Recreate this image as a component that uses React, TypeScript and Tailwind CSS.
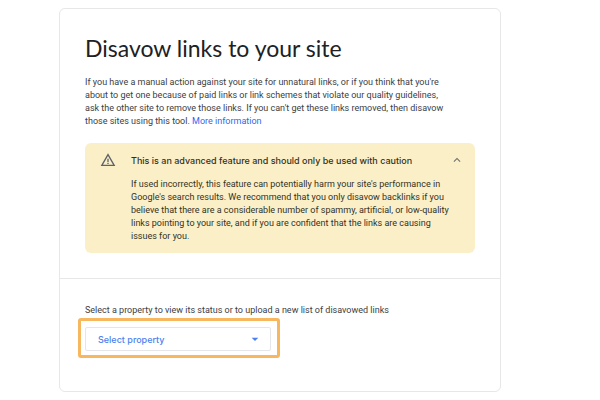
import { useState } from "react";
import { MdArrowDropDown, MdExpandLess, MdExpandMore, MdWarningAmber } from "react-icons/md";

function CautionNotice() {
  const [open, setOpen] = useState(true);

  return (
    <section className="mt-[15px] flex rounded-md bg-[#fbefc8] pt-[9px] pr-[11px] pb-2.5 pl-[15px] text-[#33321f]">
      <MdWarningAmber className="h-4 w-4 shrink-0 text-[#5f6368]" aria-hidden="true" />
      <div className="ml-[15px] min-w-0 flex-1">
        <div className="flex h-4 items-center justify-between">
          <h2 className="font-[Inter,sans-serif] text-[9px] font-medium text-[#33321f]">
            This is an advanced feature and should only be used with caution
          </h2>
          <button
            type="button"
            aria-label="Toggle details"
            aria-expanded={open}
            onClick={() => setOpen(!open)}
            className="text-[#6f7070]"
          >
            {open ? <MdExpandLess className="h-3.5 w-3.5" /> : <MdExpandMore className="h-3.5 w-3.5" />}
          </button>
        </div>
        {open && (
          <p className="mt-2.5 max-w-[325px]">
            If used incorrectly, this feature can potentially harm your site's performance in
            Google's search results. We recommend that you only disavow backlinks if you believe
            that there are a considerable number of spammy, artificial, or low-quality links
            pointing to your site, and if you are confident that the links are causing issues for
            you.
          </p>
        )}
      </div>
    </section>
  );
}

function PropertySelect() {
  return (
    <div className="flex flex-col items-start">
      <label htmlFor="property">
        Select a property to view its status or to upload a new list of disavowed links
      </label>
      <div className="-ml-[7px] mt-px rounded-[3px] border-3 border-[#f6b75e] pt-[6px] pr-[6px] pb-1 pl-1">
        <div className="grid items-center">
          <select
            id="property"
            defaultValue=""
            className="col-start-1 row-start-1 h-6 w-[186px] appearance-none rounded-xs border border-[#e4e6e9] bg-white px-3 font-[Inter,sans-serif] text-[9px] font-medium text-[#4c7ff0]"
          >
            <option value="">Select property</option>
          </select>
          <MdArrowDropDown
            className="pointer-events-none col-start-1 row-start-1 mr-2 h-4 w-4 justify-self-end text-[#4c7ff0]"
            aria-hidden="true"
          />
        </div>
      </div>
    </div>
  );
}

export default function App() {
  return (
    <main className="bg-white pt-2 pr-[99px] pb-2 pl-[59px] font-[Roboto,sans-serif] text-[9px] leading-[13px] text-[#3c4043]">
      <div className="rounded-md border border-[#e6e7e9]">
        <div className="border-b border-[#e6e7e9] px-[25px] pt-6 pb-[25px]">
          <h1 className="font-[Lato,sans-serif] text-[23px] leading-[30px] text-[#202124]">
            Disavow links to your site
          </h1>
          <p className="mt-[13px] max-w-[365px]">
            If you have a manual action against your site for unnatural links, or if you think that
            you're about to get one because of paid links or link schemes that violate our quality
            guidelines, ask the other site to remove those links. If you can't get these links
            removed, then disavow those sites using this tool.{" "}
            <a href="#more" className="text-[#3367f0]">
              More information
            </a>
          </p>
          <CautionNotice />
        </div>
        <div className="px-[25px] pt-[25px] pb-[33px]">
          <PropertySelect />
        </div>
      </div>
    </main>
  );
}
